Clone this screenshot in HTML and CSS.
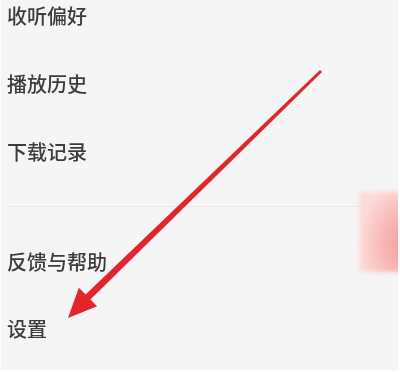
FILE: index.html
```html
<!DOCTYPE html>
<html lang="zh">
<head>
<meta charset="utf-8">
<link rel="stylesheet" href="styles.css">
</head>
<body>
<div class="screen">
  <ul class="menu">
    <li class="item">收听偏好</li>
    <li class="item">播放历史</li>
    <li class="item">下载记录</li>
  </ul>
  <div class="divider"></div>
  <ul class="menu menu-2">
    <li class="item">反馈与帮助</li>
    <li class="item">设置</li>
  </ul>
  <div class="blob"></div>
  <svg class="arrow" width="400" height="372" viewBox="0 0 400 372">
    <polygon fill="#e5232b" points="320,69.9 85.6,294.5 78.9,287.7 68,318 97.1,306.3 90.4,299.5 322,72.1"/>
  </svg>
</div>
</body>
</html>
```

FILE: styles.css
```css
html, body {
  margin: 0;
  padding: 0;
  background: #ffffff;
}
.screen {
  position: relative;
  margin: 0 2px 0 1px;
  height: 370px;
  background: #f5f5f5;
  overflow: hidden;
  font-family: "Noto Sans CJK SC", "Noto Sans", sans-serif;
}
.menu {
  list-style: none;
  margin: 0;
  padding: 2px 0 0 6px;
  display: flex;
  flex-direction: column;
  gap: 40px;
}
.item {
  height: 28px;
  line-height: 28px;
  font-size: 20px;
  font-weight: 500;
  color: #3c3c3c;
  filter: blur(0.5px);
}
.divider {
  margin: 40px 0 0 6px;
  height: 1px;
  background: #e9e9e9;
}
.menu-2 {
  padding-top: 41px;
  gap: 39px;
}
.blob {
  position: absolute;
  left: 358px;
  top: 192px;
  width: 50px;
  height: 80px;
  background: radial-gradient(ellipse 90% 80% at 90% 65%, #f79e9c 0%, #f8b9b7 50%, #fbdcda 100%);
  filter: blur(2px);
}
.arrow {
  position: absolute;
  left: -1px;
  top: 0;
  filter: blur(0.5px);
}
```
